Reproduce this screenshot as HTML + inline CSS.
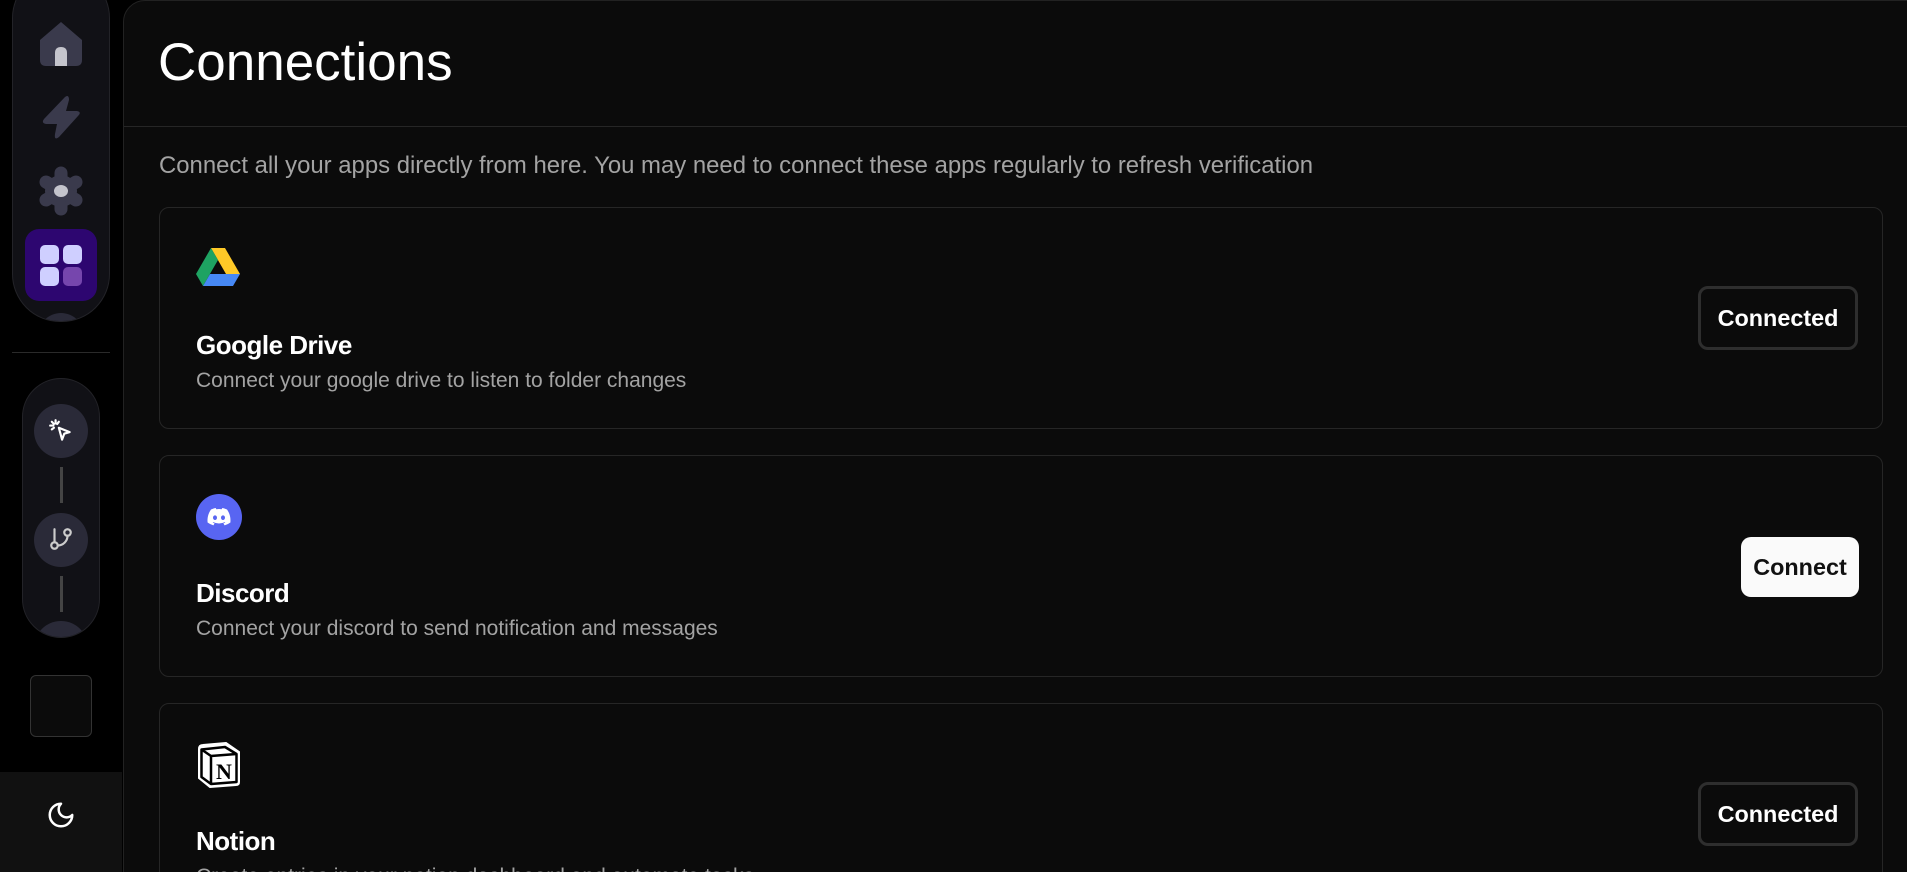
<!DOCTYPE html>
<html><head><meta charset="utf-8"><style>
*{margin:0;padding:0;box-sizing:border-box}
html,body{width:1907px;height:872px;overflow:hidden}
body{background:#000;font-family:"Liberation Sans",sans-serif;position:relative}
.abs{position:absolute}
.main{left:123px;top:0;width:1800px;height:900px;background:#0b0b0b;border:1px solid #222;border-radius:22px 0 0 22px}
.card{position:absolute;left:159px;width:1724px;height:222px;border:1px solid #262626;border-radius:10px;background:#0b0b0b}
.card h3{position:absolute;left:36px;top:122px;font-size:26px;color:#fff;font-weight:bold;letter-spacing:-0.5px}
.card p{position:absolute;left:36px;top:161px;font-size:21px;color:#a3a3a3}
.icon{position:absolute;left:36px;top:38px;width:46px;height:46px}
.btn{position:absolute;font-weight:bold;font-size:23.4px;border-radius:10px;display:flex;align-items:center;justify-content:center}
.b1{right:24px;top:78px;width:160px;height:64px;border:3px solid #2e2e2e;color:#fff;background:#0b0b0b}
.b2{right:23px;top:81px;width:118px;height:60px;background:#fafafa;color:#111}
</style></head><body>
<!-- sidebar -->
<div class="abs" style="left:12px;top:-30px;width:98px;height:352px;background:#111116;border:1px solid #232328;border-radius:48px;overflow:hidden">
 <div class="abs" style="left:25px;top:342px;width:46px;height:30px;background:#2a2a38;border-radius:23px 23px 0 0"></div>
</div>
<svg class="abs" style="left:38px;top:20px" width="46" height="46" viewBox="0 0 46 46"><path d="M2 20 L23 2 L44 20 V40 Q44 46 38 46 H8 Q2 46 2 40Z" fill="#3a3a4c"/><path d="M17 46 V33 Q17 27 23 27 Q29 27 29 33 V46Z" fill="#c4c4cc"/></svg>
<svg class="abs" style="left:41px;top:94px" width="40" height="46" viewBox="0 0 40 46"><path d="M24 3 Q28 0 28 6 L25 17 H36 Q41 18 37 22 L18 43 Q13 47 14 40 L16 30 H5 Q0 29 3 25Z" fill="#3a3a4c"/></svg>
<svg class="abs" style="left:38px;top:166px" width="46" height="50" viewBox="0 0 46 50"><circle cx="23" cy="25" r="16" fill="#3a3a4c"/><g stroke="#3a3a4c" stroke-width="13" stroke-linecap="round"><path d="M23 25 L23 7"/><path d="M23 25 L23 43"/><path d="M23 25 L8 16"/><path d="M23 25 L38 16"/><path d="M23 25 L8 34"/><path d="M23 25 L38 34"/></g><ellipse cx="23" cy="25" rx="7" ry="6" fill="#c4c4cc"/></svg>
<div class="abs" style="left:25px;top:229px;width:72px;height:72px;background:#2d0670;border-radius:14px"></div>
<div class="abs" style="left:40px;top:245px;width:19px;height:19px;background:#cfcfff;border-radius:5px"></div>
<div class="abs" style="left:63px;top:245px;width:19px;height:19px;background:#cfcfff;border-radius:5px"></div>
<div class="abs" style="left:40px;top:267px;width:19px;height:19px;background:#cfcfff;border-radius:5px"></div>
<div class="abs" style="left:63px;top:267px;width:19px;height:19px;background:#7646ad;border-radius:5px"></div>
<div class="abs" style="left:12px;top:352px;width:98px;height:1px;background:#2a2a2a"></div>
<div class="abs" style="left:22px;top:378px;width:78px;height:260px;background:#111116;border:1px solid #232328;border-radius:39px;overflow:hidden">
 <div class="abs" style="left:11px;top:25px;width:54px;height:54px;border-radius:50%;background:#2a2a38"></div>
 <div class="abs" style="left:37px;top:88px;width:3px;height:36px;background:#444"></div>
 <div class="abs" style="left:11px;top:134px;width:54px;height:54px;border-radius:50%;background:#2a2a38"></div>
 <div class="abs" style="left:37px;top:197px;width:3px;height:36px;background:#444"></div>
 <div class="abs" style="left:11px;top:242px;width:54px;height:54px;border-radius:50%;background:#2a2a38"></div>
</div>
<svg class="abs" style="left:48px;top:418px" width="26" height="26" viewBox="0 0 24 24" fill="none" stroke="#fff" stroke-width="2" stroke-linecap="round" stroke-linejoin="round"><path d="M10 9 L20 13 L15 14.5 L13 20Z"/><path d="M7 2v3M2 7h3M3.5 3.5l2 2M10 3.5l-1.5 2M3.5 10.5l2-1.5"/></svg>
<svg class="abs" style="left:48px;top:526px" width="26" height="26" viewBox="0 0 24 24" fill="none" stroke="#ccc" stroke-width="2" stroke-linecap="round"><path d="M6 3v12"/><circle cx="18" cy="6" r="3"/><circle cx="6" cy="18" r="3"/><path d="M18 9a9 9 0 0 1-9 9"/></svg>
<div class="abs" style="left:30px;top:675px;width:62px;height:62px;border:1px solid #333;border-radius:6px;background:#0b0b0b"></div>
<div class="abs" style="left:0;top:772px;width:122px;height:100px;background:#111"></div>
<svg class="abs" style="left:46px;top:800px" width="30" height="30" viewBox="0 0 24 24" fill="none" stroke="#fff" stroke-width="2" stroke-linecap="round" stroke-linejoin="round"><path d="M12 3a6 6 0 0 0 9 9 9 9 0 1 1-9-9Z"/></svg>
<!-- main -->
<div class="abs main"></div>
<div class="abs" style="left:158px;top:32px;font-size:53px;color:#fff">Connections</div>
<div class="abs" style="left:124px;top:126px;width:1783px;height:1px;background:#262626"></div>
<div class="abs" style="left:159px;top:152px;font-size:23.9px;color:#a3a3a3">Connect all your apps directly from here. You may need to connect these apps regularly to refresh verification</div>

<div class="card" style="top:207px">
 <svg class="icon" style="top:40px;width:44px;height:39px" viewBox="0 0 44 39"><path d="M15 0 H29 L44 26 H30Z" fill="#ffc927"/><path d="M15 0 L0 26 L7 38 L22 12Z" fill="#1ea362"/><path d="M7 38 H37 L44 26 H14Z" fill="#4688f4"/></svg>
 <h3>Google Drive</h3><p>Connect your google drive to listen to folder changes</p>
 <div class="btn b1">Connected</div>
</div>
<div class="card" style="top:455px">
 <svg class="icon" viewBox="0 0 46 46"><circle cx="23" cy="23" r="23" fill="#5865f2"/><path d="M31 15.5a19 19 0 0 0-4.7-1.5l-.6 1.2a17 17 0 0 0-5.4 0l-.6-1.2a19 19 0 0 0-4.7 1.5c-3 4.4-3.8 8.700-3.4 13a19 19 0 0 0 5.8 2.9l1.2-2a12 12 0 0 1-1.9-.9l.5-.4a13.5 13.5 0 0 0 11.6 0l.5.4a12 12 0 0 1-1.9.9l1.2 2a19 19 0 0 0 5.8-2.9c.5-5-.8-9.3-3.4-13zM19 26c-1.1 0-2-1-2-2.3s.9-2.3 2-2.3 2 1 2 2.3-.9 2.3-2 2.3zm8 0c-1.1 0-2-1-2-2.3s.9-2.3 2-2.3 2 1 2 2.3-.9 2.3-2 2.3z" fill="#fff"/></svg>
 <h3>Discord</h3><p>Connect your discord to send notification and messages</p>
 <div class="btn b2">Connect</div>
</div>
<div class="card" style="top:703px">
 <svg class="icon" viewBox="0 0 46 46"><path d="M3 7 Q3 3 7 3 L30 1 L43 10 V40 Q43 43 40 43 L14 45 L3 36Z" fill="#fff" stroke="#fff" stroke-width="2"/><path d="M5.5 7.5 L29 5 L40.5 12 V40 L15 42 L5.5 35Z M5.5 7.5 L15 14 L40.5 12 M15 14 V42" fill="none" stroke="#000" stroke-width="2.5" stroke-linejoin="round"/><text x="28" y="37" font-family="Liberation Serif,serif" font-weight="bold" font-size="22" text-anchor="middle" fill="#000">N</text></svg>
 <h3>Notion</h3><p>Create entries in your notion dashboard and automate tasks.</p>
 <div class="btn b1">Connected</div>
</div>
</body></html>
